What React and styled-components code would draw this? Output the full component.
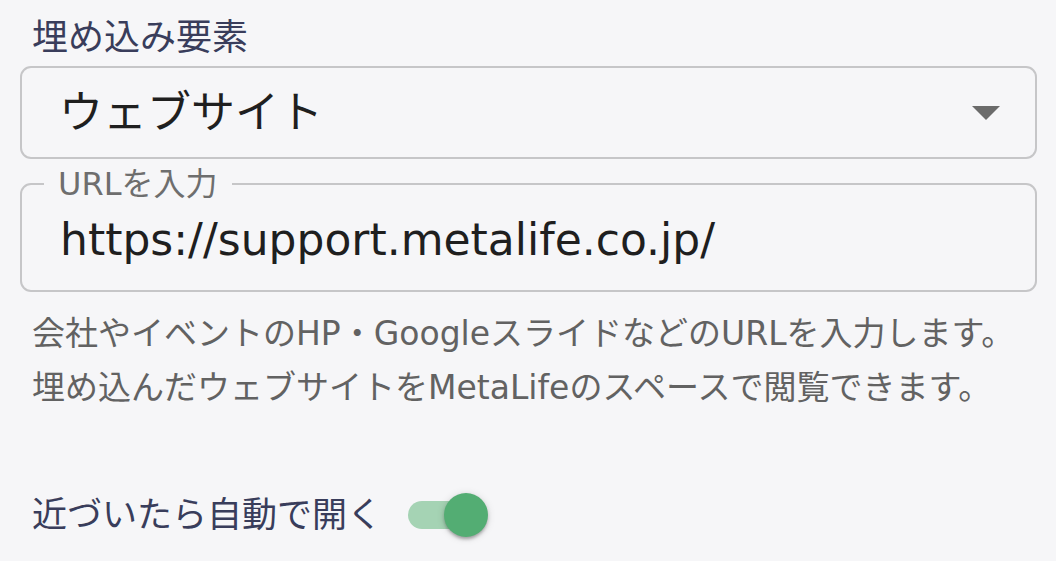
import React, { useState } from "react";
import styled, { createGlobalStyle } from "styled-components";

const Global = createGlobalStyle`
  html, body { margin: 0; padding: 0; background: #f6f6f8; }
  body { font-family: "DejaVu Sans", "Noto Sans CJK JP", sans-serif; }
  * { box-sizing: border-box; }
`;

const Page = styled.div`
  width: 1056px;
  height: 561px;
  padding: 18px 19px 0 20px;
  display: flex;
  flex-direction: column;
  background: #f6f6f8;
  overflow: hidden;
`;

const FieldLabel = styled.div`
  font-size: 36px;
  line-height: 40px;
  color: #393d5b;
  margin-left: 12px;
  margin-bottom: 8px;
`;

const SelectBox = styled.div`
  height: 93px;
  flex-shrink: 0;
  border: 2px solid #c6c6c8;
  border-radius: 11px;
  display: flex;
  align-items: center;
  justify-content: space-between;
  padding: 0 35px 0 37px;
`;

const SelectValue = styled.span`
  font-size: 44px;
  line-height: 52px;
  color: #1f1f1f;
`;

const Caret = styled.svg`
  width: 28px;
  height: 14px;
  display: block;
`;

const OutlinedField = styled.fieldset`
  margin: 7px 0 0 0;
  padding: 0;
  height: 126px;
  flex-shrink: 0;
  border: 2px solid #c6c6c8;
  border-radius: 11px;
`;

const Legend = styled.legend`
  margin-left: 22px;
  padding: 0 14px;
  font-size: 32px;
  line-height: 36px;
  color: #6e6e6e;
`;

const InputText = styled.div`
  padding: 12px 0 0 38px;
  font-size: 44px;
  line-height: 52px;
  color: #1f1f1f;
  white-space: nowrap;
`;

const Helper = styled.p`
  margin: 15px 0 0 12px;
  font-size: 33px;
  line-height: 54px;
  color: #626262;
  white-space: nowrap;
`;

const ToggleRow = styled.div`
  margin: 78px 0 0 12px;
  display: flex;
  align-items: center;
  gap: 26px;
`;

const ToggleLabel = styled.span`
  font-size: 35px;
  line-height: 44px;
  color: #393d5b;
`;

const SwitchRoot = styled.button`
  position: relative;
  width: 80px;
  height: 44px;
  padding: 0;
  border: 0;
  background: transparent;
  cursor: pointer;
  display: flex;
  align-items: center;
`;

const Track = styled.span`
  display: block;
  width: 72px;
  height: 28px;
  border-radius: 14px;
  background: ${(p) => (p.$on ? "#a5d3b4" : "#c8c8c8")};
`;

const Knob = styled.span`
  position: absolute;
  top: 0;
  left: ${(p) => (p.$on ? "36px" : "0px")};
  width: 44px;
  height: 44px;
  border-radius: 50%;
  background: ${(p) => (p.$on ? "#53ad73" : "#fafafa")};
  box-shadow: 0 3px 3px -1px rgba(0, 0, 0, 0.2), 0 2px 4px 0 rgba(0, 0, 0, 0.14),
    0 1px 8px 0 rgba(0, 0, 0, 0.12);
`;

export default function App() {
  const [on, setOn] = useState(true);
  return (
    <>
      <Global />
      <Page>
        <FieldLabel>埋め込み要素</FieldLabel>
        <SelectBox>
          <SelectValue>ウェブサイト</SelectValue>
          <Caret viewBox="0 0 28 14">
            <path d="M0 0 L28 0 L14 14 Z" fill="#6b6b6b" />
          </Caret>
        </SelectBox>
        <OutlinedField>
          <Legend>URLを入力</Legend>
          <InputText>https://support.metalife.co.jp/</InputText>
        </OutlinedField>
        <Helper>
          会社やイベントのHP・GoogleスライドなどのURLを入力します。
          <br />
          埋め込んだウェブサイトをMetaLifeのスペースで閲覧できます。
        </Helper>
        <ToggleRow>
          <ToggleLabel>近づいたら自動で開く</ToggleLabel>
          <SwitchRoot onClick={() => setOn(!on)} aria-pressed={on}>
            <Track $on={on} />
            <Knob $on={on} />
          </SwitchRoot>
        </ToggleRow>
      </Page>
    </>
  );
}
